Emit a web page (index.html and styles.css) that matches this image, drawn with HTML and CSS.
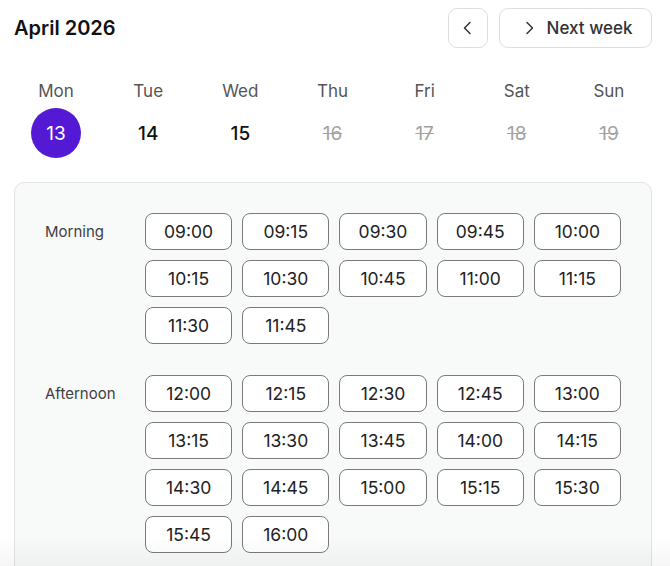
FILE: index.html
```html
<!DOCTYPE html>
<html lang="en">
<head>
<meta charset="utf-8">
<title>Booking</title>
<link rel="stylesheet" href="styles.css">
</head>
<body>
<div class="page">
  <header class="header">
    <h1 class="title">April 2026</h1>
    <div class="nav">
      <button class="btn btn-icon" aria-label="Previous week">
        <svg width="16" height="16" viewBox="0 0 16 16"><path d="M10 2.5 L4.5 8 L10 13.5" fill="none" stroke="#333" stroke-width="1.5" stroke-linecap="round" stroke-linejoin="round"/></svg>
      </button>
      <button class="btn btn-next">
        <svg width="16" height="16" viewBox="0 0 16 16"><path d="M6 2.5 L11.5 8 L6 13.5" fill="none" stroke="#333" stroke-width="1.5" stroke-linecap="round" stroke-linejoin="round"/></svg>
        <span>Next week</span>
      </button>
    </div>
  </header>

  <div class="days">
    <div class="day"><span class="dname">Mon</span><span class="dnum selected">13</span></div>
    <div class="day"><span class="dname">Tue</span><span class="dnum">14</span></div>
    <div class="day"><span class="dname">Wed</span><span class="dnum">15</span></div>
    <div class="day"><span class="dname">Thu</span><span class="dnum off">16</span></div>
    <div class="day"><span class="dname">Fri</span><span class="dnum off">17</span></div>
    <div class="day"><span class="dname">Sat</span><span class="dnum off">18</span></div>
    <div class="day"><span class="dname">Sun</span><span class="dnum off">19</span></div>
  </div>

  <section class="card">
    <div class="period">
      <div class="plabel">Morning</div>
      <div class="slots">
        <button class="slot">09:00</button><button class="slot">09:15</button><button class="slot">09:30</button><button class="slot">09:45</button><button class="slot">10:00</button>
        <button class="slot">10:15</button><button class="slot">10:30</button><button class="slot">10:45</button><button class="slot">11:00</button><button class="slot">11:15</button>
        <button class="slot">11:30</button><button class="slot">11:45</button>
      </div>
    </div>
    <div class="period">
      <div class="plabel">Afternoon</div>
      <div class="slots">
        <button class="slot">12:00</button><button class="slot">12:15</button><button class="slot">12:30</button><button class="slot">12:45</button><button class="slot">13:00</button>
        <button class="slot">13:15</button><button class="slot">13:30</button><button class="slot">13:45</button><button class="slot">14:00</button><button class="slot">14:15</button>
        <button class="slot">14:30</button><button class="slot">14:45</button><button class="slot">15:00</button><button class="slot">15:15</button><button class="slot">15:30</button>
        <button class="slot">15:45</button><button class="slot">16:00</button>
      </div>
    </div>
  </section>
</div>
<div class="fade"></div>
</body>
</html>
```
FILE: styles.css
```css
* { box-sizing: border-box; }
html, body { margin: 0; padding: 0; background: #fff; }
body {
  font-family: Inter, "Noto Sans", sans-serif;
  color: #111;
  overflow: hidden;
  height: 566px;
}
.page { padding: 8px 18px 0 14px; }
.header {
  display: flex;
  justify-content: space-between;
  align-items: center;
  height: 40px;
}
.title {
  margin: 0;
  font-size: 20px;
  font-weight: 600;
  color: #111;
}
.nav { display: flex; gap: 11px; }
.btn {
  height: 40px;
  border: 1px solid #dedede;
  border-radius: 9px;
  background: #fff;
  display: flex;
  align-items: center;
  justify-content: center;
  font-family: inherit;
  cursor: pointer;
  padding: 0;
}
.btn-icon { width: 40px; }
.btn-next {
  width: 153px;
  gap: 10px;
  padding-left: 2px;
  font-size: 17px;
  font-weight: 500;
  color: #333;
}
.days {
  display: grid;
  grid-template-columns: repeat(7, 1fr);
  margin: 32px -3px 0 -4px;
}
.day {
  display: flex;
  flex-direction: column;
  align-items: center;
  gap: 6px;
}
.dname {
  font-size: 17px;
  line-height: 22px;
  color: #555;
}
.dnum {
  width: 50px;
  height: 50px;
  border-radius: 50%;
  display: flex;
  align-items: center;
  justify-content: center;
  font-size: 19px;
  font-weight: 500;
  color: #111;
}
.dnum.selected { background: #5419d4; color: #fff; font-weight: 400; }
.dnum.off { color: #a3a3a3; text-decoration: line-through; font-weight: 400; }
.card {
  margin-top: 24px;
  background: #f8f9f9;
  border: 1px solid #e3e3e3;
  border-radius: 10px;
  padding: 30px 30px 40px;
  display: flex;
  flex-direction: column;
  gap: 31px;
}
.period { display: flex; }
.plabel {
  width: 100px;
  flex: none;
  font-size: 15px;
  font-weight: 400;
  color: #3f3f3f;
  padding-top: 9px;
}
.slots {
  flex: 1;
  display: grid;
  grid-template-columns: repeat(5, 1fr);
  gap: 10px;
}
.slot {
  height: 37px;
  border: 1px solid #7a7a7a;
  border-radius: 8px;
  background: #fff;
  font-family: inherit;
  font-size: 17.5px;
  color: #222;
  padding: 0;
}
.fade {
  position: fixed;
  left: 0; right: 0; bottom: 0;
  height: 30px;
  background: linear-gradient(to bottom, rgba(0,0,0,0), rgba(0,0,0,0.035));
  pointer-events: none;
}
```
